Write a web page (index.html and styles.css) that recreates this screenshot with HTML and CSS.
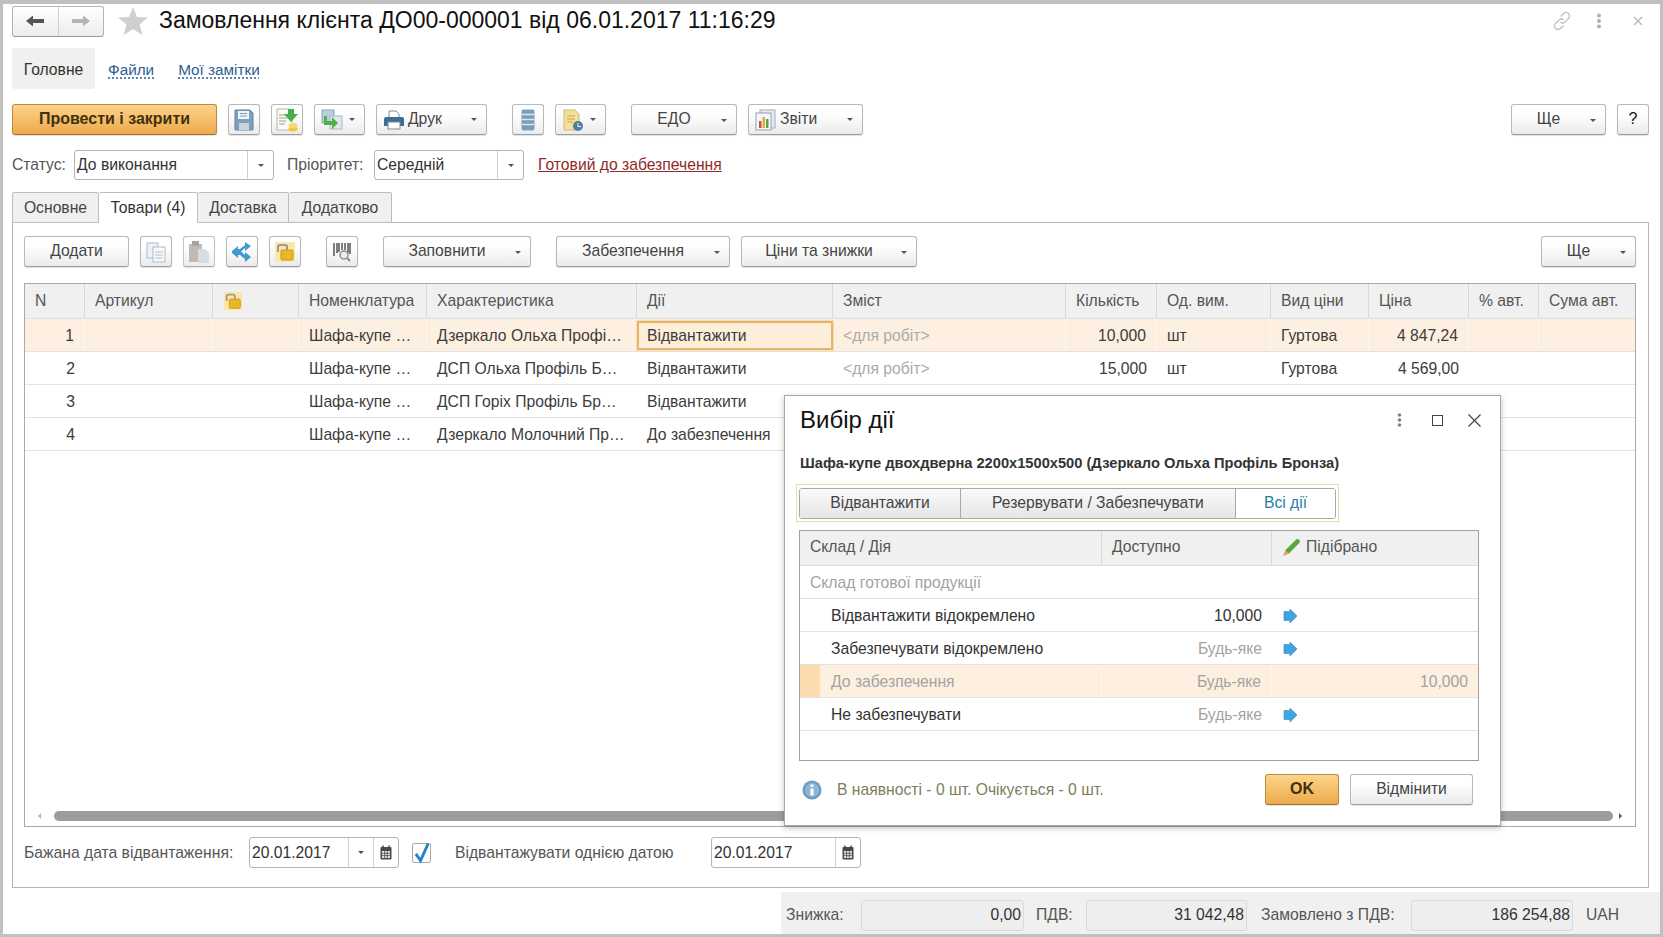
FILE: index.html
```html
<!DOCTYPE html>
<html lang="uk">
<head>
<meta charset="utf-8">
<title>Замовлення клієнта</title>
<link rel="stylesheet" href="styles.css">
</head>
<body>
<div class="frame">
  <header class="head">
    <div class="histnav">
      <span class="histbtn"><svg width="20" height="14" viewBox="0 0 20 14"><path d="M1 7 8 1.5V5h11v4H8v3.5z" fill="#555"/></svg></span>
      <span class="histbtn"><svg width="20" height="14" viewBox="0 0 20 14"><path d="M19 7 12 1.5V5H1v4h11v3.5z" fill="#b4b4b4"/></svg></span>
    </div>
    <svg class="star" width="30" height="28" viewBox="0 0 30 28"><path d="M15 0l4 10 11 .6-8.500 7 2.900 10.400L15 22l-9.400 6 2.900-10.400L0 10.600 11 10z" fill="#cfcfcf"/></svg>
    <h1 class="title">Замовлення клієнта ДО00-000001 від 06.01.2017 11:16:29</h1>
    <div class="winicons">
      <svg class="ic-link" width="20" height="20" viewBox="0 0 20 20" fill="none" stroke="#c4c4c4" stroke-width="1.500"><path d="M8.500 5.500 11.500 2.500a3.200 3.200 0 0 1 5 5l-3.500 3.500a3.200 3.200 0 0 1-4.500 0M11.500 14.500l-3 3a3.200 3.200 0 0 1-5-5L7 9a3.200 3.200 0 0 1 4.500 0"/></svg>
      <svg class="ic-dots" width="6" height="16" viewBox="0 0 6 16" fill="#b0b0b0"><circle cx="3" cy="2.500" r="2"/><circle cx="3" cy="8" r="2"/><circle cx="3" cy="13.500" r="2"/></svg>
      <svg class="ic-x" width="10" height="10" viewBox="0 0 10 10" stroke="#b4b4b4" stroke-width="1.200"><path d="M1 1l8 8M9 1 1 9"/></svg>
    </div>
  </header>

  <nav class="pages">
    <span class="page active">Головне</span>
    <a class="page link l-files">Файли</a>
    <a class="page link l-notes">Мої замітки</a>
  </nav>

  <div class="toolbar top">
    <button class="btn primary b-post">Провести і закрити</button>
    <button class="btn icon b-save"><svg width="20" height="22" viewBox="0 0 20 22"><path d="M1 1h15l3 3v17H1z" fill="#7f9fbc" stroke="#5f83a4"/><rect x="4" y="2" width="11" height="8" fill="#f2f5f8"/><path d="M6 4.500h7M6 7h7" stroke="#7b97b1"/><rect x="5" y="14" width="10" height="7" fill="#c7d3de"/></svg></button>
    <button class="btn icon b-save2"><svg width="24" height="24" viewBox="0 0 24 24"><path d="M2 1h12l3 3v18H2z" fill="#fbfbf5" stroke="#b7b7a0"/><path d="M4 7h8M4 10h8M4 13h7M4 16h6" stroke="#9c9c8c"/><path d="M13 1h6v5h4l-7 8-7-8h4z" fill="#43b04a"/><ellipse cx="18" cy="21" rx="4.500" ry="2.500" fill="#f0c63c"/><ellipse cx="18" cy="17.500" rx="4.500" ry="2.500" fill="#f6da6e"/></svg></button>
    <button class="btn icon-drop b-chain"><svg width="22" height="22" viewBox="0 0 22 22"><rect x="1" y="1" width="12" height="13" fill="#b7cfe2" stroke="#8aa2b6"/><rect x="9" y="7" width="12" height="13" fill="#dfe8ef" stroke="#a7b8c6"/><path d="M3 7h3v5h5V8l6 6-6 6v-4H3z" fill="#4fb043"/></svg><i class="caret"></i></button>
    <button class="btn withicon b-print"><svg width="22" height="20" viewBox="0 0 22 20"><path d="M6 1h7l3 3v5H6z" fill="#fff" stroke="#7b8c9b"/><path d="M1 9a2 2 0 0 1 2-2h16a2 2 0 0 1 2 2v7H1z" fill="#3f6d92"/><rect x="5" y="12" width="12" height="7" fill="#fff" stroke="#7b8c9b"/></svg><span>Друк</span><i class="caret"></i></button>
    <button class="btn icon b-list"><svg width="14" height="22" viewBox="0 0 14 22"><rect x=".5" y=".5" width="13" height="21" rx="2" fill="#7d9cb5"/><path d="M1 5.500h12M1 10.500h12M1 15.500h12" stroke="#dfe7ee" stroke-width="1.500"/></svg></button>
    <button class="btn icon-drop b-doc"><svg width="22" height="24" viewBox="0 0 22 24"><path d="M2 2h11l4 4v16H2z" fill="#f7df9b" stroke="#cdb877"/><path d="M5 8h8M5 11h8M5 14h6" stroke="#c9a94f"/><circle cx="16" cy="18" r="5" fill="#4f7da3"/><path d="M16 15v3.500h3" stroke="#fff" fill="none"/></svg><i class="caret"></i></button>
    <button class="btn drop b-edo"><span class="lbl">ЕДО</span><i class="caret"></i></button>
    <button class="btn withicon b-rep"><svg width="22" height="22" viewBox="0 0 22 22"><rect x="5" y="1" width="15" height="18" fill="#e4ebf1" stroke="#9fb0bd"/><rect x="1" y="4" width="15" height="17" fill="#f5f7f9" stroke="#8ea2b3"/><rect x="4" y="12" width="2.500" height="7" fill="#c9503f"/><rect x="7.500" y="8" width="2.500" height="11" fill="#e3a93c"/><rect x="11" y="10" width="2.500" height="9" fill="#58a24c"/></svg><span>Звіти</span><i class="caret"></i></button>
    <button class="btn drop b-more"><span class="lbl">Ще</span><i class="caret"></i></button>
    <button class="btn b-help">?</button>
  </div>

  <div class="statusrow">
    <label class="lab l-status">Статус:</label>
    <div class="field f-status"><span class="fval">До виконання</span><span class="fdrop"><i class="caret"></i></span></div>
    <label class="lab l-prio">Пріоритет:</label>
    <div class="field f-prio"><span class="fval">Середній</span><span class="fdrop"><i class="caret"></i></span></div>
    <a class="readylink">Готовий до забезпечення</a>
  </div>

  <div class="tabs">
    <span class="tab t1">Основне</span>
    <span class="tab t2 on">Товари (4)</span>
    <span class="tab t3">Доставка</span>
    <span class="tab t4">Додатково</span>
  </div>

  <section class="panel">
    <div class="toolbar inner">
      <button class="btn b-add">Додати</button>
      <button class="btn icon b-copy"><svg width="22" height="22" viewBox="0 0 22 22"><rect x="2" y="2" width="11" height="15" fill="#eef3f7" stroke="#a9bccb"/><rect x="8" y="6" width="12" height="15" fill="#f7f9fb" stroke="#a9bccb"/><path d="M10 11h8M10 14h8M10 17h8" stroke="#b0c0cc"/></svg></button>
      <button class="btn icon b-paste"><svg width="22" height="24" viewBox="0 0 22 24"><rect x="1" y="4" width="13" height="18" fill="#b7aea8"/><rect x="4" y="1" width="7" height="5" fill="#9b928c"/><path d="M10 9h7l4 4v10H10z" fill="#ced7de"/></svg></button>
      <button class="btn icon b-tree"><svg width="22" height="22" viewBox="0 0 22 22"><path d="M1 10l6-5v3h2l5-4V1l6 4-6 5V7l-4 3.500 4 3.500v-3l6 5-6 5v-3l-5-4H7v3l-6-5z" fill="#3f9bd2"/></svg></button>
      <button class="btn icon b-lock"><svg width="22" height="22" viewBox="0 0 22 22"><rect x="1" y="1" width="20" height="20" fill="#fbe7a8"/><path d="M4 11V6a2 2 0 0 1 2-2h5a2 2 0 0 1 2 2v3" fill="none" stroke="#9a9a9a" stroke-width="2"/><rect x="7" y="9" width="12" height="10" rx="1" fill="#eab62b" stroke="#c99618"/></svg></button>
      <button class="btn icon b-bar"><svg width="22" height="22" viewBox="0 0 22 22"><path d="M3 2v13M6 2v10M8 2v9M11 2v7M14 2v7M17 2v10M19 2v11" stroke="#555" stroke-width="1.500"/><circle cx="13" cy="14" r="4" fill="#e6eef4" stroke="#8b8b8b" stroke-width="1.500"/><path d="M16 17l3 3" stroke="#8b8b8b" stroke-width="2"/></svg></button>
      <button class="btn drop b-fill"><span class="lbl">Заповнити</span><i class="caret"></i></button>
      <button class="btn drop b-prov"><span class="lbl">Забезпечення</span><i class="caret"></i></button>
      <button class="btn drop b-prices"><span class="lbl">Ціни та знижки</span><i class="caret"></i></button>
      <button class="btn drop b-more2"><span class="lbl">Ще</span><i class="caret"></i></button>
    </div>

    <div class="grid">
      <div class="g-row g-head">
        <span>N</span><span>Артикул</span><span><svg class="lock-h" width="20" height="20" viewBox="0 0 22 22"><rect x="1" y="1" width="20" height="20" fill="#fbe7a8"/><path d="M4 11V6a2 2 0 0 1 2-2h5a2 2 0 0 1 2 2v3" fill="none" stroke="#9a9a9a" stroke-width="2"/><rect x="7" y="9" width="12" height="10" rx="1" fill="#eab62b" stroke="#c99618"/></svg></span><span>Номенклатура</span><span>Характеристика</span><span>Дії</span><span>Зміст</span><span>Кількість</span><span>Од. вим.</span><span>Вид ціни</span><span>Ціна</span><span>% авт.</span><span>Сума авт.</span>
      </div>
      <div class="g-row sel">
        <span class="num">1</span><span></span><span></span><span>Шафа-купе …</span><span>Дзеркало Ольха Профі…</span><span class="cur">Відвантажити</span><span class="mute">&lt;для робіт&gt;</span><span class="num">10,000</span><span>шт</span><span>Гуртова</span><span class="num">4 847,24</span><span></span><span></span>
      </div>
      <div class="g-row">
        <span class="num">2</span><span></span><span></span><span>Шафа-купе …</span><span>ДСП Ольха Профіль Б…</span><span>Відвантажити</span><span class="mute">&lt;для робіт&gt;</span><span class="num">15,000</span><span>шт</span><span>Гуртова</span><span class="num">4 569,00</span><span></span><span></span>
      </div>
      <div class="g-row">
        <span class="num">3</span><span></span><span></span><span>Шафа-купе …</span><span>ДСП Горіх Профіль Бр…</span><span>Відвантажити</span><span></span><span></span><span></span><span></span><span></span><span></span><span></span>
      </div>
      <div class="g-row">
        <span class="num">4</span><span></span><span></span><span>Шафа-купе …</span><span>Дзеркало Молочний Пр…</span><span>До забезпечення</span><span></span><span></span><span></span><span></span><span></span><span></span><span></span>
      </div>
      <div class="g-fill"></div>
      <div class="hscroll">
        <i class="arr arr-l"></i>
        <div class="thumb"></div>
        <i class="arr arr-r"></i>
      </div>
    </div>

    <div class="daterow">
      <label class="lab l-date">Бажана дата відвантаження:</label>
      <div class="field f-date"><span class="fval">20.01.2017</span><span class="fdrop"><i class="caret"></i></span><span class="fcal"><svg width="12" height="15" viewBox="0 0 12 15"><rect x=".5" y="2" width="11" height="12.500" rx="1" fill="#4a4a4a"/><rect x="2" y="6" width="8" height="7" fill="#e8e8e8"/><path d="M2 8.300h8M2 10.600h8M4.600 6v7M7.300 6v7" stroke="#4a4a4a" stroke-width=".8"/><path d="M3 .5v3M9 .5v3" stroke="#4a4a4a" stroke-width="1.500"/></svg></span></div>
      <span class="check"><svg width="18" height="22" viewBox="0 0 18 22"><path d="M3 12l5 7L16 1" fill="none" stroke="#1f86c5" stroke-width="3"/></svg></span>
      <label class="lab l-same">Відвантажувати однією датою</label>
      <div class="field f-date2"><span class="fval">20.01.2017</span><span class="fcal"><svg width="12" height="15" viewBox="0 0 12 15"><rect x=".5" y="2" width="11" height="12.500" rx="1" fill="#4a4a4a"/><rect x="2" y="6" width="8" height="7" fill="#e8e8e8"/><path d="M2 8.300h8M2 10.600h8M4.600 6v7M7.300 6v7" stroke="#4a4a4a" stroke-width=".8"/><path d="M3 .5v3M9 .5v3" stroke="#4a4a4a" stroke-width="1.500"/></svg></span></div>
    </div>
  </section>

  <footer class="summary">
    <span class="s-lab s1">Знижка:</span><span class="s-val v1">0,00</span>
    <span class="s-lab s2">ПДВ:</span><span class="s-val v2">31 042,48</span>
    <span class="s-lab s3">Замовлено з ПДВ:</span><span class="s-val v3">186 254,88</span>
    <span class="s-lab s4">UAH</span>
  </footer>

  <aside class="dialog">
    <div class="d-head">
      <h2 class="d-title">Вибір дії</h2>
      <svg class="d-dots" width="5" height="14" viewBox="0 0 5 14" fill="#808080"><circle cx="2.500" cy="2" r="1.800"/><circle cx="2.500" cy="7" r="1.800"/><circle cx="2.500" cy="12" r="1.800"/></svg>
      <svg class="d-max" width="11" height="11" viewBox="0 0 11 11"><rect x=".5" y=".5" width="10" height="10" fill="none" stroke="#444"/></svg>
      <svg class="d-x" width="13" height="13" viewBox="0 0 13 13" stroke="#444" stroke-width="1.200"><path d="M.5.5l12 12M12.500.5l-12 12"/></svg>
    </div>
    <div class="d-sub">Шафа-купе двохдверна 2200х1500х500 (Дзеркало Ольха Профіль Бронза)</div>
    <div class="d-seg-wrap">
      <div class="d-seg">
        <span class="seg s-a">Відвантажити</span>
        <span class="seg s-b">Резервувати / Забезпечувати</span>
        <span class="seg s-c">Всі дії</span>
      </div>
    </div>
    <div class="d-grid">
      <div class="d-row d-hrow"><span>Склад / Дія</span><span>Доступно</span><span class="pick"><svg width="20" height="20" viewBox="0 0 18 18"><path d="M3 12 12.500 2.500a2 2 0 0 1 3 3L6 15z" fill="#5aa63f"/><path d="M3 12l3 3-5 2z" fill="#d9a05a"/></svg>Підібрано</span></div>
      <div class="d-row"><span class="grey">Склад готової продукції</span><span></span><span></span></div>
      <div class="d-row"><span class="ind">Відвантажити відокремлено</span><span class="r">10,000</span><span class="go"><svg width="15" height="16" viewBox="0 0 15 16"><path d="M1 3.500h6V1l7 7-7 7v-2.500H1z" fill="#41a5e2" stroke="#2f86bd" stroke-width=".6"/></svg></span></div>
      <div class="d-row"><span class="ind">Забезпечувати відокремлено</span><span class="r grey">Будь-яке</span><span class="go"><svg width="15" height="16" viewBox="0 0 15 16"><path d="M1 3.500h6V1l7 7-7 7v-2.500H1z" fill="#41a5e2" stroke="#2f86bd" stroke-width=".6"/></svg></span></div>
      <div class="d-row d-sel"><span class="ind grey"><i class="mark"></i>До забезпечення</span><span class="r grey">Будь-яке</span><span class="r grey">10,000</span></div>
      <div class="d-row"><span class="ind">Не забезпечувати</span><span class="r grey">Будь-яке</span><span class="go"><svg width="15" height="16" viewBox="0 0 15 16"><path d="M1 3.500h6V1l7 7-7 7v-2.500H1z" fill="#41a5e2" stroke="#2f86bd" stroke-width=".6"/></svg></span></div>
    </div>
    <div class="d-foot">
      <svg class="d-info" width="20" height="20" viewBox="0 0 20 20"><circle cx="10" cy="10" r="9.500" fill="#6d9cc4"/><circle cx="10" cy="10" r="7" fill="#8fb6d8"/><rect x="8.500" y="8.500" width="3" height="7" fill="#fff"/><rect x="8.500" y="4.500" width="3" height="2.500" fill="#fff"/></svg>
      <span class="d-note">В наявності - 0 шт. Очікується - 0 шт.</span>
      <button class="btn primary b-ok">OK</button>
      <button class="btn b-cancel">Відмінити</button>
    </div>
  </aside>
</div>
</body>
</html>
```
FILE: styles.css
```css
* { box-sizing: border-box; }
html, body { margin: 0; padding: 0; }
body { font-family: "Liberation Sans", Arial, sans-serif; font-size: 15.7px; color: #3c3c3c; background: #fff; }
.frame { position: relative; width: 1663px; height: 937px; overflow: hidden; background: #fff; border-style: solid; border-color: #c0c0c0; border-width: 4px 3px 3px 3px; }

/* header */
.head { display: flex; align-items: center; height: 33px; padding: 1px 0 0 9px; }
.histnav { display: flex; width: 92px; height: 31px; border: 1px solid #b4b4b4; border-bottom-color: #999; border-radius: 3px; background: linear-gradient(#fff, #ececec); }
.histbtn { flex: 1; display: flex; align-items: center; justify-content: center; }
.histbtn + .histbtn { border-left: 1px solid #cfcfcf; }
.star { margin-left: 14px; }
.title { margin: 0 0 2px 11px; font-size: 23px; font-weight: 400; color: #111; white-space: nowrap; }
.winicons { margin-left: auto; display: flex; align-items: center; padding-right: 17px; }
.ic-dots { margin-left: 24px; }
.ic-x { margin-left: 31px; }

/* page tabs */
.pages { display: flex; align-items: center; height: 41px; margin: 11px 0 0 9px; }
.page { display: flex; align-items: center; height: 41px; padding-top: 2px; }
.page.active { width: 83px; justify-content: center; background: #f0f0f0; border-radius: 3px; color: #333; }
.link { font-size: 15.3px; color: #2b5e92; text-decoration: underline dotted #2b5e92; text-underline-offset: 3px; }
.l-files { margin-left: 13px; }
.l-notes { margin-left: 24px; }

/* buttons */
.btn { display: flex; align-items: center; justify-content: center; height: 31px; padding: 0 0 1px; font: inherit; color: #444; border: 1px solid #b8b8b8; border-bottom-color: #9d9d9d; border-radius: 3px; background: linear-gradient(#fff 30%, #ebebeb); box-shadow: 0 1px 1px rgba(0,0,0,.12); }
.btn.primary { background: linear-gradient(#fbd48a, #edaa4c); border-color: #b98d3f; border-bottom-color: #9c7530; color: #43300f; font-weight: 700; font-size: 16px; }
.caret { display: inline-block; width: 0; height: 0; border-style: solid; border-width: 3px 3px 0; border-color: #555 transparent transparent; }
.drop { position: relative; }
.drop .caret { position: absolute; right: 9px; top: 14px; }
.drop .lbl { padding-right: 20px; }
.icon-drop { justify-content: flex-start; padding: 0 0 0 6px; }
.icon-drop .caret { margin-left: auto; margin-right: 9px; }
.withicon { justify-content: flex-start; padding: 0 0 2px 6px; }
.withicon span { margin-left: 3px; }
.withicon svg { margin-top: 2px; }
.withicon .caret { margin-left: auto; margin-right: 9px; margin-top: 2px; }
.icon { padding: 0; }

.toolbar { display: flex; align-items: center; height: 31px; }
.toolbar.top { margin: 15px 0 0 9px; }
.b-post { width: 205px; }
.b-save { width: 32px; margin-left: 11px; }
.b-save2 { width: 32px; margin-left: 11px; }
.b-chain { width: 51px; margin-left: 11px; }
.b-print { width: 111px; margin-left: 11px; }
.b-list { width: 32px; margin-left: 25px; }
.b-doc { width: 51px; margin-left: 11px; }
.b-edo { width: 106px; margin-left: 25px; }
.b-rep { width: 115px; margin-left: 11px; }
.b-more { width: 95px; margin-left: auto; }
.b-help { width: 32px; margin: 0 11px 0 11px; font-size: 16px; color: #111; }

/* status */
.statusrow { display: flex; align-items: center; height: 30px; margin: 15px 0 0 9px; }
.lab { color: #555; white-space: nowrap; }
.field { display: flex; align-items: stretch; height: 30px; border: 1px solid #b4b4b4; border-radius: 3px; background: #fff; color: #333; }
.fval { flex: 1; display: flex; align-items: center; padding: 0 0 0 2px; white-space: nowrap; }
.fdrop { width: 26px; display: flex; align-items: center; justify-content: center; border-left: 1px solid #cfcfcf; }
.fcal { width: 25px; display: flex; align-items: center; justify-content: center; border-left: 1px solid #cfcfcf; }
.l-status { width: 62px; }
.f-status { width: 200px; }
.l-prio { margin-left: 13px; width: 87px; }
.f-prio { width: 150px; }
.readylink { margin-left: 14px; color: #8e2b2b; text-decoration: underline; white-space: nowrap; }

/* tabs */
.tabs { display: flex; height: 31px; margin: 12px 0 -1px 9px; position: relative; }
.tab { display: flex; align-items: center; justify-content: center; height: 31px; background: #f0f0f0; border: 1px solid #bdbdbd; border-left-width: 0; border-radius: 2px 2px 0 0; color: #444; }
.tab.t1 { width: 87px; border-left-width: 1px; }
.tab.t2 { width: 99px; background: #fff; border-bottom-color: #fff; color: #333; }
.tab.t3 { width: 91px; }
.tab.t4 { width: 103px; }

/* panel */
.panel { width: 1637px; height: 666px; margin-left: 9px; padding: 13px 12px 0 11px; border: 1px solid #b5b5b5; }
.b-add { width: 105px; }
.b-copy { width: 32px; margin-left: 11px; }
.b-paste { width: 32px; margin-left: 11px; opacity: .85; }
.b-tree { width: 32px; margin-left: 11px; }
.b-lock { width: 32px; margin-left: 11px; }
.b-bar { width: 32px; margin-left: 25px; }
.b-fill { width: 148px; margin-left: 25px; }
.b-prov { width: 174px; margin-left: 25px; }
.b-prices { width: 176px; margin-left: 11px; }
.b-more2 { width: 95px; margin-left: auto; }

/* grid */
.grid { display: flex; flex-direction: column; width: 1612px; height: 544px; margin-top: 16px; border: 1px solid #a9a9a9; }
.g-row { flex: none; display: grid; grid-template-columns: 60px 128px 86px 128px 210px 196px 233px 91px 114px 98px 100px 70px 96px; height: 33px; border-bottom: 1px solid #e2e2e2; color: #3c3c3c; }
.g-row > span { display: flex; align-items: center; padding: 1px 10px 0; white-space: nowrap; overflow: hidden; }
.g-head { height: 35px; background: #f0f0f0; border-bottom: 1px solid #dedede; color: #555; }
.g-head > span { border-right: 1px solid #d8d8d8; padding-top: 0; padding-bottom: 1px; }
.g-head > span:last-child { border-right: 0; }
.num { justify-content: flex-end; }
.mute { color: #aaa; }
.sel { background: #fdf0e0; }
.sel > span { border-right: 1px solid #fdf7ee; }
.sel > span:last-child { border-right: 0; }
.g-row > .cur { background: #fdeed9; border: 2px solid #e8b566; padding: 0 8px; margin-top: 2px; height: 29px; box-shadow: 0 0 0 1px #f7ddb7; }
.g-fill { flex: 1; }
.hscroll { flex: none; display: flex; align-items: center; height: 14px; margin-bottom: 3px; padding: 0 10px; }
.arr { width: 0; height: 0; border-style: solid; border-width: 3px; }
.arr-l { border-color: transparent #b0b0b0 transparent transparent; }
.arr-r { border-color: transparent transparent transparent #555; margin-left: 6px; }
.thumb { flex: 1; height: 10px; margin-left: 13px; border-radius: 5px; background: #9c9c9c; }
.lock-h { margin-top: 1px; }

/* date row */
.daterow { display: flex; align-items: center; height: 31px; margin-top: 10px; }
.l-date { width: 225px; }
.f-date { width: 150px; height: 31px; }
.f-date .fdrop { width: 25px; }
.check { display: flex; align-items: center; justify-content: center; width: 19px; height: 20px; margin-left: 13px; border: 1px solid #a9a9a9; border-radius: 2px; }
.l-same { margin-left: 24px; width: 256px; }
.f-date2 { width: 150px; height: 31px; }

/* summary */
.summary { position: absolute; right: 0; bottom: 0; display: flex; align-items: center; width: 879px; height: 42px; padding-left: 5px; background: #f0f0f0; }
.s-lab { margin-top: 5px; padding-bottom: 1px; color: #555; white-space: nowrap; }
.s-val { display: flex; align-items: center; justify-content: flex-end; height: 31px; margin-top: 5px; padding: 0 2px 1px 0; border: 1px solid #dadada; border-radius: 3px; background: #eeeeee; color: #333; }
.s1 { width: 75px; }
.v1 { width: 163px; }
.s2 { margin-left: 12px; width: 50px; }
.v2 { width: 161px; }
.s3 { margin-left: 14px; width: 150px; }
.v3 { width: 162px; }
.s4 { margin-left: 13px; }

/* dialog */
.dialog { position: absolute; left: 781px; top: 391px; width: 717px; height: 431px; padding: 0 14px; background: #fff; border: 1px solid #a8a8a8; box-shadow: 0 2px 6px rgba(0,0,0,.25); }
.d-head { display: flex; align-items: center; height: 52px; padding: 0 0 4px 1px; }
.d-title { margin: 0; font-size: 24px; font-weight: 400; color: #111; }
.d-dots { margin-left: auto; }
.d-max { margin-left: 30px; }
.d-x { margin-left: 25px; margin-right: 5px; }
.d-sub { display: flex; align-items: center; height: 32px; padding: 0 0 3px 1px; font-size: 14.67px; font-weight: 700; color: #333; white-space: nowrap; }
.d-seg-wrap { width: 543px; height: 38px; margin: 4px 0 0 -3px; padding: 3px 2px 3px 2px; border: 1px solid #ecdca8; }
.d-seg { display: flex; height: 31px; border: 1px solid #a9a9a9; border-radius: 3px; overflow: hidden; }
.seg { display: flex; align-items: center; justify-content: center; padding-bottom: 2px; background: linear-gradient(#f9f9f9, #e6e6e6); color: #444; border-right: 1px solid #a9a9a9; }
.s-a { width: 161px; }
.s-b { width: 275px; }
.s-c { flex: 1; background: #fff; color: #2a7fa8; border-right: 0; }
.d-grid { width: 680px; height: 231px; margin-top: 8px; border: 1px solid #a0a0a0; }
.d-row { display: grid; grid-template-columns: 302px 170px 206px; height: 33px; border-bottom: 1px solid #e2e2e2; color: #333; }
.d-row > span { display: flex; align-items: center; padding: 1px 10px 0; white-space: nowrap; position: relative; }
.d-hrow { height: 35px; background: #f0f0f0; border-bottom-color: #dedede; color: #555; }
.d-hrow > span { border-right: 1px solid #d8d8d8; padding-top: 0; padding-bottom: 2px; }
.d-hrow > span:last-child { border-right: 0; }
.pick svg { margin-right: 4px; }
.d-row > .ind { padding-left: 31px; }
.d-row > .r { justify-content: flex-end; }
.grey { color: #a3a3a3; }
.d-row > .go { padding-left: 11px; }
.d-sel { background: #fdf0e0; }
.d-sel > span { border-right: 1px solid #fdf7ee; }
.d-sel > span:last-child { border-right: 0; }
.mark { position: absolute; left: 0; top: 0; bottom: 0; width: 20px; background: #fcdcae; }
.d-foot { display: flex; align-items: center; height: 31px; margin-top: 13px; }
.d-info { margin-left: 3px; }
.d-note { margin-left: 15px; color: #7e7e5c; white-space: nowrap; }
.b-ok { width: 74px; margin-left: auto; }
.b-cancel { width: 123px; margin: 0 13px 0 11px; }
```
